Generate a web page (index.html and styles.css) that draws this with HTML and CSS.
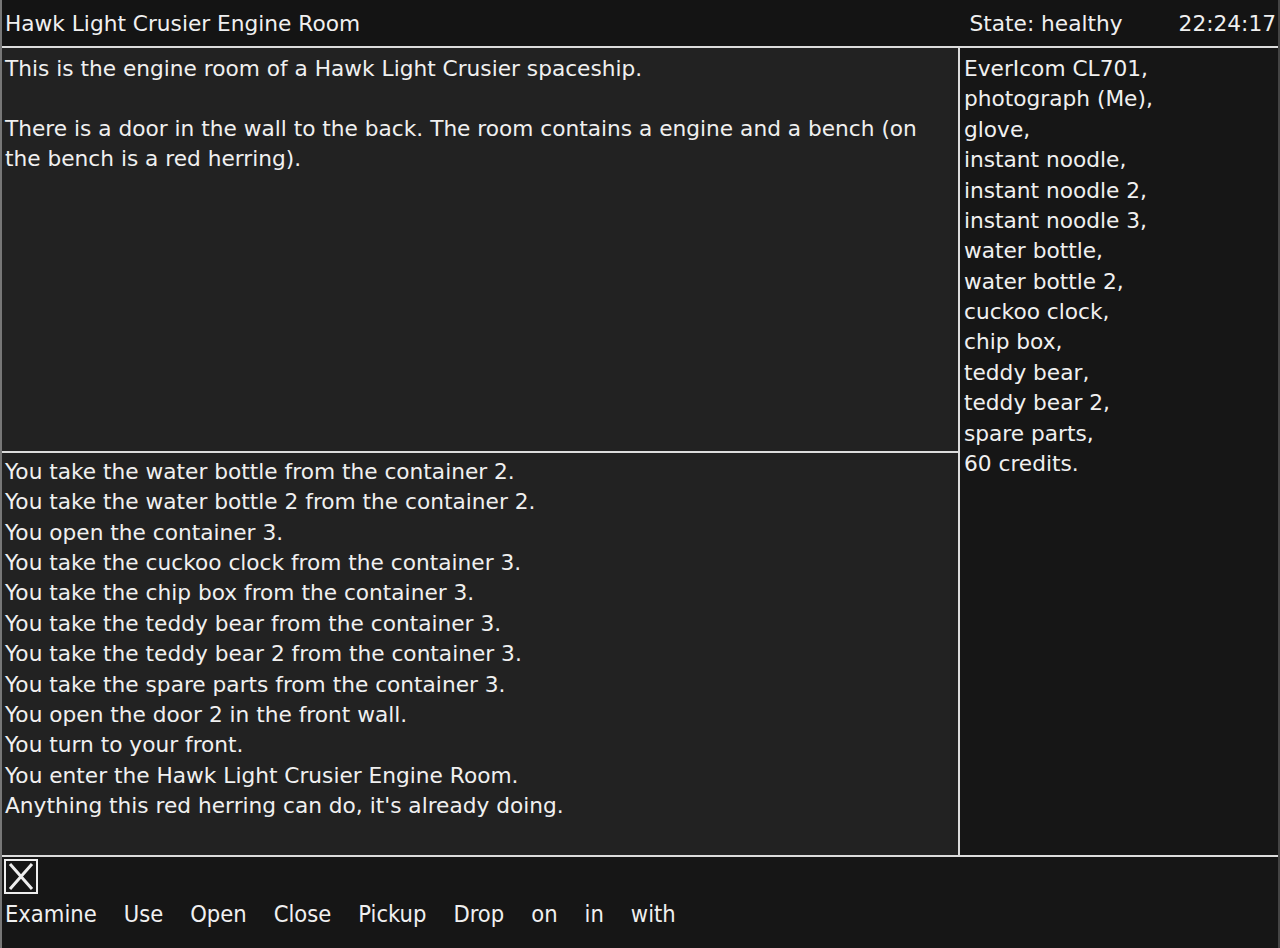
FILE: index.html
```html
<!DOCTYPE html>
<html>
<head>
<meta charset="utf-8">
<link rel="stylesheet" href="styles.css">
</head>
<body>
<div class="app">
  <header class="topbar">
    <div class="title">Hawk Light Crusier Engine Room</div>
    <div class="state">State: healthy</div>
    <div class="clock">22:24:17</div>
  </header>
  <main class="middle">
    <section class="left">
      <div class="description">
        <p>This is the engine room of a Hawk Light Crusier spaceship.</p>
        <p>There is a door in the wall to the back. The room contains a engine and a bench (on the bench is a red herring).</p>
      </div>
      <div class="log">
        <div>You take the water bottle from the container 2.</div>
        <div>You take the water bottle 2 from the container 2.</div>
        <div>You open the container 3.</div>
        <div>You take the cuckoo clock from the container 3.</div>
        <div>You take the chip box from the container 3.</div>
        <div>You take the teddy bear from the container 3.</div>
        <div>You take the teddy bear 2 from the container 3.</div>
        <div>You take the spare parts from the container 3.</div>
        <div>You open the door 2 in the front wall.</div>
        <div>You turn to your front.</div>
        <div>You enter the Hawk Light Crusier Engine Room.</div>
        <div>Anything this red herring can do, it's already doing.</div>
      </div>
    </section>
    <aside class="inventory">
      <div>EverIcom CL701,</div>
      <div>photograph (Me),</div>
      <div>glove,</div>
      <div>instant noodle,</div>
      <div>instant noodle 2,</div>
      <div>instant noodle 3,</div>
      <div>water bottle,</div>
      <div>water bottle 2,</div>
      <div>cuckoo clock,</div>
      <div>chip box,</div>
      <div>teddy bear,</div>
      <div>teddy bear 2,</div>
      <div>spare parts,</div>
      <div>60 credits.</div>
    </aside>
  </main>
  <footer class="bottom">
    <div class="closebox">
      <svg width="34" height="35" viewBox="0 0 34 35">
        <rect x="1" y="1" width="32" height="33" fill="none" stroke="#eee" stroke-width="2"/>
        <path d="M6 5 L28 30 M28 5 L6 30" stroke="#eee" stroke-width="3" fill="none"/>
      </svg>
    </div>
    <nav class="verbs">
      <span>Examine</span>
      <span>Use</span>
      <span>Open</span>
      <span>Close</span>
      <span>Pickup</span>
      <span>Drop</span>
      <span>on</span>
      <span>in</span>
      <span>with</span>
    </nav>
  </footer>
</div>
</body>
</html>
```
FILE: styles.css
```css
html, body {
  margin: 0;
  padding: 0;
  background: #161616;
}
body {
  font-family: "DejaVu Sans", "Liberation Sans", sans-serif;
  font-size: 21.7px;
  color: #f0f0f0;
}
.app {
  width: 1280px;
  height: 948px;
  display: flex;
  flex-direction: column;
  box-sizing: border-box;
  border-left: 2px solid #777;
  border-right: 2px solid #444;
}
.topbar {
  height: 46px;
  display: flex;
  align-items: center;
  border-bottom: 2px solid #dcdcdc;
  background: #141414;
  padding: 0 2px 0 3px;
}
.title { flex: 1; }
.state { margin-right: 56px; }
.middle {
  height: 807px;
  display: flex;
  border-bottom: 2px solid #dcdcdc;
}
.left {
  width: 956px;
  display: flex;
  flex-direction: column;
  border-right: 2px solid #dcdcdc;
  background: #222;
}
.description {
  height: 405px;
  border-bottom: 2px solid #dcdcdc;
  padding: 6px 3px 0;
  line-height: 30px;
  box-sizing: border-box;
}
.description p { margin: 0 0 30px; }
.log {
  flex: 1;
  padding: 4px 3px 0;
  line-height: 30.36px;
}
.inventory {
  flex: 1;
  background: #161616;
  padding: 6px 4px 0;
  line-height: 30.38px;
}
.bottom {
  flex: 1;
  display: flex;
  flex-direction: column;
  padding: 2px 2px 0;
  background: #161616;
}
.closebox { height: 36px; }
.closebox svg { display: block; }
.verbs {
  display: flex;
  gap: 27px;
  font-family: "DejaVu Sans Condensed", "DejaVu Sans", sans-serif;
  font-stretch: condensed;
  font-size: 23.5px;
  padding-left: 1px;
  line-height: 38px;
}
```
